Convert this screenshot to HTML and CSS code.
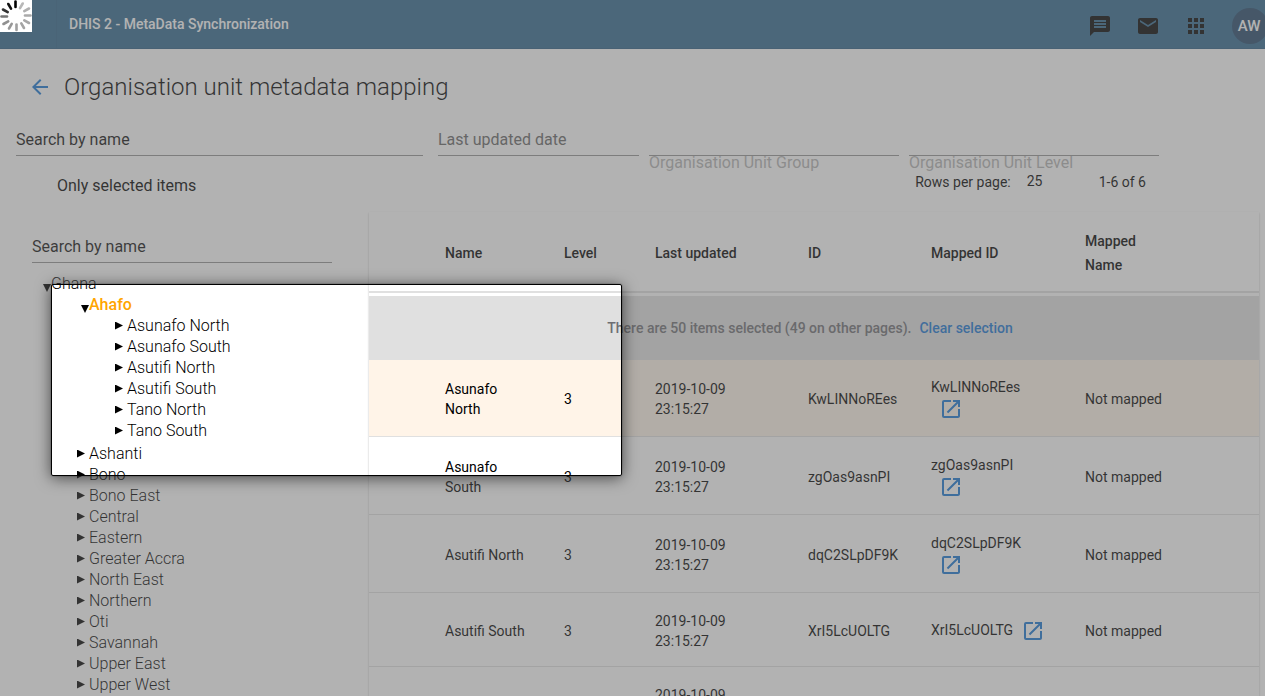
FILE: index.html
```html
<!DOCTYPE html>
<html lang="en">
<head>
<meta charset="utf-8">
<title>DHIS 2 - MetaData Synchronization</title>
<link rel="stylesheet" href="styles.css">
</head>
<body>
<svg class="defs" aria-hidden="true">
  <symbol id="open" viewBox="0 0 24 24"><path d="M19 19H5V5h7V3H5a2 2 0 0 0-2 2v14a2 2 0 0 0 2 2h14c1.1 0 2-.9 2-2v-7h-2v7zM14 3v2h3.59l-9.83 9.83 1.41 1.41L19 6.41V10h2V3h-7z"/></symbol>
</svg>
<header class="topbar">
  <div class="logo"></div>
  <div class="app-name">DHIS 2 - MetaData Synchronization</div>
  <nav class="tools">
    <button class="tool" aria-label="Interpretations"><svg viewBox="0 0 24 24"><path d="M20 2H4c-1.1 0-2 .9-2 2v18l4-4h14c1.1 0 2-.9 2-2V4c0-1.100-.9-2-2-2zm-2 12H6v-2h12v2zm0-3H6V9h12v2zm0-3H6V6h12v2z"/></svg></button>
    <button class="tool" aria-label="Messages"><svg viewBox="0 0 24 24"><path d="M20 4H4c-1.100 0-2 .9-2 2v12c0 1.100.9 2 2 2h16c1.100 0 2-.9 2-2V6c0-1.100-.9-2-2-2zm0 4l-8 5-8-5V6l8 5 8-5v2z"/></svg></button>
    <button class="tool" aria-label="Apps"><svg viewBox="0 0 24 24"><path d="M4 8h4V4H4v4zm6 12h4v-4h-4v4zm-6 0h4v-4H4v4zm0-6h4v-4H4v4zm6 0h4v-4h-4v4zm6-10v4h4V4h-4zm-6 4h4V4h-4v4zm6 6h4v-4h-4v4zm0 6h4v-4h-4v4z"/></svg></button>
    <button class="avatar">AW</button>
  </nav>
</header>

<main>
  <div class="title-row">
    <button class="back" aria-label="Back"><svg viewBox="0 0 24 24"><path d="M20 11H7.830l5.590-5.590L12 4l-8 8 8 8 1.410-1.410L7.830 13H20v-2z"/></svg></button>
    <h1>Organisation unit metadata mapping</h1>
  </div>

  <div class="filters">
    <input class="field search" type="text" placeholder="Search by name" aria-label="Search by name">
    <input class="field date" type="text" placeholder="Last updated date" aria-label="Last updated date">
    <div class="picker"><button class="field" id="group" aria-labelledby="group-label"></button><label id="group-label" for="group">Organisation Unit Group</label></div>
    <div class="picker"><button class="field" id="level" aria-labelledby="level-label"></button><label id="level-label" for="level">Organisation Unit Level</label></div>
  </div>

  <div class="options">
    <label class="only"><input type="checkbox">Only selected items</label>
    <div class="paging"><label for="rows">Rows per page:</label><select id="rows"><option>25</option></select><span>1-6 of 6</span></div>
  </div>

  <div class="content">
    <aside>
      <input class="field" type="text" placeholder="Search by name" aria-label="Search organisation units">
      <ul class="tree">
        <li><div class="node"><button class="open" aria-label="Collapse"></button>Ghana</div>
          <ul>
            <li class="branch"><div class="node current"><button class="open" aria-label="Collapse"></button>Ahafo</div>
              <ul>
                <li class="node"><button aria-label="Expand"></button>Asunafo North</li>
                <li class="node"><button aria-label="Expand"></button>Asunafo South</li>
                <li class="node"><button aria-label="Expand"></button>Asutifi North</li>
                <li class="node"><button aria-label="Expand"></button>Asutifi South</li>
                <li class="node"><button aria-label="Expand"></button>Tano North</li>
                <li class="node"><button aria-label="Expand"></button>Tano South</li>
              </ul>
            </li>
            <li class="node"><button aria-label="Expand"></button>Ashanti</li>
            <li class="node"><button aria-label="Expand"></button>Bono</li>
            <li class="node"><button aria-label="Expand"></button>Bono East</li>
            <li class="node"><button aria-label="Expand"></button>Central</li>
            <li class="node"><button aria-label="Expand"></button>Eastern</li>
            <li class="node"><button aria-label="Expand"></button>Greater Accra</li>
            <li class="node"><button aria-label="Expand"></button>North East</li>
            <li class="node"><button aria-label="Expand"></button>Northern</li>
            <li class="node"><button aria-label="Expand"></button>Oti</li>
            <li class="node"><button aria-label="Expand"></button>Savannah</li>
            <li class="node"><button aria-label="Expand"></button>Upper East</li>
            <li class="node"><button aria-label="Expand"></button>Upper West</li>
          </ul>
        </li>
      </ul>
    </aside>

    <section class="card">
      <table>
        <colgroup><col class="c-check"><col class="c-name"><col class="c-level"><col class="c-date"><col class="c-id"><col class="c-mapped"><col></colgroup>
        <thead>
          <tr><th></th><th>Name</th><th>Level</th><th>Last updated</th><th>ID</th><th>Mapped ID</th><th>Mapped Name</th></tr>
        </thead>
        <tbody>
          <tr class="notice"><td colspan="7">There are 50 items selected (49 on other pages).<a href="#">Clear selection</a></td></tr>
          <tr class="tall selected"><td></td><td>Asunafo North</td><td>3</td><td>2019-10-09 23:15:27</td><td>KwLINNoREes</td><td class="stack"><span>KwLINNoREes</span><a href="#" aria-label="Open mapping"><svg><use href="#open"/></svg></a></td><td>Not mapped</td></tr>
          <tr class="tall"><td></td><td>Asunafo South</td><td>3</td><td>2019-10-09 23:15:27</td><td>zgOas9asnPI</td><td class="stack"><span>zgOas9asnPI</span><a href="#" aria-label="Open mapping"><svg><use href="#open"/></svg></a></td><td>Not mapped</td></tr>
          <tr class="tall"><td></td><td>Asutifi North</td><td>3</td><td>2019-10-09 23:15:27</td><td>dqC2SLpDF9K</td><td class="stack"><span>dqC2SLpDF9K</span><a href="#" aria-label="Open mapping"><svg><use href="#open"/></svg></a></td><td>Not mapped</td></tr>
          <tr><td></td><td>Asutifi South</td><td>3</td><td>2019-10-09 23:15:27</td><td>XrI5LcUOLTG</td><td class="inline"><span>XrI5LcUOLTG</span><a href="#" aria-label="Open mapping"><svg><use href="#open"/></svg></a></td><td>Not mapped</td></tr>
          <tr><td></td><td></td><td></td><td>2019-10-09 23:15:27</td><td></td><td></td><td></td></tr>
        </tbody>
      </table>
    </section>
  </div>
</main>

<div class="spotlight"></div>
<div class="spinner" role="status" aria-label="Loading">
  <svg viewBox="0 0 32 32" stroke-width="2.600" stroke-linecap="round">
    <path stroke="#000" d="M15.500 1.500v5.500"/>
    <path stroke="#b8b8b8" d="M22.700 3.500l-2.700 4.700"/>
    <path stroke="#b0b0b0" d="M29 8.500l-4.700 2.700"/>
    <path stroke="#aaa" d="M30.500 15.500h-5.500"/>
    <path stroke="#a8a8a8" d="M29 23l-4.700-2.700"/>
    <path stroke="#a4a4a4" d="M24 28l-2.700-4.700"/>
    <path stroke="#a0a0a0" d="M16.500 30v-5.500"/>
    <path stroke="#989898" d="M9 28.500l2.700-4.700"/>
    <path stroke="#909090" d="M3.500 24l4.700-2.700"/>
    <path stroke="#777" d="M1.500 16.500h5.500"/>
    <path stroke="#333" d="M3 9.500l4.700 2.700"/>
    <path stroke="#111" d="M8.300 4l2.700 4.700"/>
  </svg>
</div>
</body>
</html>
```
FILE: styles.css
```css
* { box-sizing: border-box; }
body {
  margin: 0;
  height: 100vh;
  position: relative;
  overflow: hidden;
  background: #fff;
  color: #000;
  font-family: Roboto, "Liberation Sans", sans-serif;
}
button { padding: 0; border: 0; background: none; font: inherit; color: inherit; }
svg { display: block; width: 24px; height: 24px; fill: currentColor; }
.defs { display: none; }
ul { margin: 0; padding: 0; list-style: none; }
a { color: #1976d2; text-decoration: none; }

.topbar {
  display: flex;
  align-items: center;
  height: 49px;
  background: #31688f;
  border-bottom: 1px solid #2c5f84;
}
.logo { width: 57px; height: 48px; border-right: 1px solid #2f6389; }
.app-name { padding-left: 12px; color: #fff; font-size: 14px; font-weight: 500; }
.tools { display: flex; align-items: center; gap: 24px; margin-left: auto; padding-top: 3px; }
.avatar {
  width: 36px;
  height: 36px;
  margin: 0 -3px 0 0;
  padding-right: 2px;
  border-radius: 50%;
  background: #26496a;
  color: #fff;
  font-size: 15px;
  font-weight: 500;
}

.title-row { display: flex; align-items: center; gap: 12px; height: 76px; padding-left: 28px; }
.back { color: #1976d2; }
h1 { margin: 0; font-size: 24px; font-weight: 300; }

.filters { display: flex; gap: 10px; height: 31px; padding: 0 106px 0 16px; }
.field {
  display: block;
  width: 100%;
  height: 31px;
  padding: 0 0 2px;
  border: 0;
  border-bottom: 1px solid #949494;
  border-radius: 0;
  background: none;
  font: 16px Roboto, sans-serif;
}
.field::placeholder { color: #111; opacity: 1; }
.search { flex: 1; min-width: 0; margin-right: 5px; }
.date { width: 201px; }
.date::placeholder { color: #666; }
.picker { width: 250px; }
.picker label { display: block; color: #b3b3b3; font-size: 16px; line-height: 14px; }

.options { display: flex; justify-content: space-between; height: 56px; padding: 16px 119px 0 57px; }
.only { font-size: 16px; line-height: 28px; }
.only input { position: absolute; opacity: 0; }
.paging { display: flex; font-size: 14px; line-height: 20px; }
.paging select {
  width: 72px;
  height: 18px;
  margin-left: 16px;
  padding: 0;
  border: 0;
  appearance: none;
  background: none;
  color: #000;
  font: 14px Roboto, sans-serif;
}

.content { display: flex; padding-right: 6px; }
aside { width: 369px; padding: 20px 37px 0 32px; }
.tree { padding: 10px 0 0 11px; font-size: 16px; font-weight: 300; line-height: 21px; }
.tree ul { padding-left: 34px; }
.tree .branch { padding-bottom: 2px; }
.tree .branch > * { margin-left: 4px; }
.node { display: flex; align-items: center; height: 21px; }
.node button { width: 12px; height: 8px; flex: none; }
.node button::before {
  content: "";
  display: block;
  width: 8px;
  height: 8px;
  background: #000;
  clip-path: polygon(0 0, 100% 50%, 0 100%);
}
.node .open { width: 8px; padding-top: 9px; height: 17px; }
.node .open::before { clip-path: polygon(0 0, 100% 0, 50% 100%); }
.current { color: #ffa500; font-weight: 500; }

.card { flex: 1; min-width: 0; box-shadow: 0 1px 2px rgba(0, 0, 0, .25); }
table { width: 100%; table-layout: fixed; border-spacing: 0; font-size: 14px; line-height: 20px; }
.c-check { width: 76px; }
.c-name { width: 119px; }
.c-level { width: 91px; }
.c-date { width: 153px; }
.c-id { width: 123px; }
.c-mapped { width: 154px; }
th, td { padding: 2px 36px 0 0; border-bottom: 1px solid #e0e0e0; text-align: left; vertical-align: middle; }
th { height: 81px; border-bottom-width: 2px; font-weight: 500; line-height: 24px; }
th:last-child { padding-right: 90px; }
td { height: 74px; }
.tall td { height: 78px; }
.tall.selected td { height: 77px; background: #fff4e8; }
.notice td {
  height: 67px;
  padding: 0 8px 0 0;
  border-top: 3px solid #fff;
  border-bottom: 0;
  background: #e0e0e0;
  color: #6e6e73;
  font-weight: 500;
  text-align: center;
}
.notice a { margin-left: 8px; }
.stack span { display: block; }
.stack a, .inline a { display: inline-block; margin-left: 8px; vertical-align: middle; }
.stack a { display: block; width: 24px; }
.inline { padding-right: 0; }

.spotlight {
  position: absolute;
  left: 51px;
  top: 284px;
  width: 571px;
  height: 192px;
  border: 1px solid #000;
  border-radius: 2px;
  box-shadow: 0 0 1px 0 #000, 0 2px 15px rgba(0, 0, 0, .6), 0 0 0 2000px rgba(101, 101, 101, .5);
}
.spinner { position: absolute; left: 0; top: 0; width: 32px; height: 32px; background: #fff; }
.spinner svg { width: 32px; height: 32px; }
```
